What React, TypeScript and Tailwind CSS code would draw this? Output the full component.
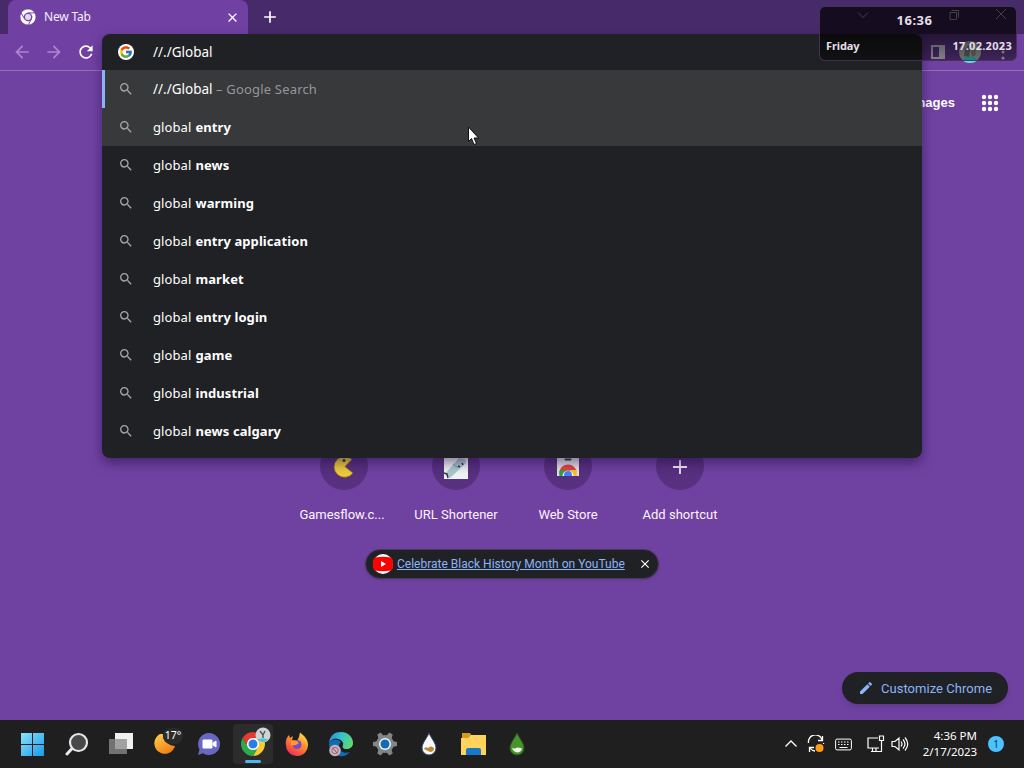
import React from "react";
import { MdArrowBack, MdArrowForward, MdRefresh, MdSearch, MdClose, MdAdd, MdEdit } from "react-icons/md";
import { FcGoogle } from "react-icons/fc";

const suggestions = [
  "entry",
  "news",
  "warming",
  "entry application",
  "market",
  "entry login",
  "game",
  "industrial",
  "news calgary",
];

function ChromeLogo({ size, mono = false }: { size: number; mono?: boolean }) {
  const sector = "M24 12H44.78A24 24 0 0 0 3.22 12L13.61 30A12 12 0 0 1 24 12Z";
  return (
    <svg width={size} height={size} viewBox="0 0 48 48">
      {!mono && <circle cx="24" cy="24" r="14" fill="#fff" />}
      <path d={sector} fill={mono ? "#fff" : "#e33b2e"} stroke={mono ? "#6b3fa0" : "none"} strokeWidth="2" />
      <path d={sector} transform="rotate(120 24 24)" fill={mono ? "#fff" : "#fcc934"} stroke={mono ? "#6b3fa0" : "none"} strokeWidth="2" />
      <path d={sector} transform="rotate(240 24 24)" fill={mono ? "#fff" : "#2da94f"} stroke={mono ? "#6b3fa0" : "none"} strokeWidth="2" />
      <circle cx="24" cy="24" r="9" fill={mono ? "#e9d9f5" : "#2a7de9"} />
    </svg>
  );
}

function TabStrip() {
  return (
    <div className="flex h-[34px] shrink-0 bg-[#472a6a] pl-2">
      <div className="flex h-full w-[240px] items-center rounded-t-lg bg-[#7041a3] pl-3 pr-2">
        <ChromeLogo size={16} mono />
        <span className="ml-2 grow text-[12px] tracking-[-0.2px] text-[#f6effc]">New Tab</span>
        <MdClose size={15} className="text-white" />
      </div>
      <div className="flex items-center pl-[12px] text-white">
        <MdAdd size={20} />
      </div>
      <div className="ml-auto flex items-start gap-[77px] pr-[16px] pt-2 text-[#ddd]">
        <svg width="14" height="14" viewBox="0 0 14 14" fill="none" stroke="currentColor"><path d="M2 4.500l5 5 5-5" /></svg>
        <svg width="14" height="14" viewBox="0 0 14 14" fill="none" stroke="currentColor"><path d="M3 4.500h6.500v7H3zM4.500 2.500h7v7" /></svg>
        <svg width="14" height="14" viewBox="0 0 14 14" fill="none" stroke="currentColor" className="-ml-[44px]"><path d="M2 1l10 10M12 1L2 11" /></svg>
      </div>
    </div>
  );
}

function Toolbar() {
  return (
    <div className="flex h-[37px] shrink-0 items-center border-b border-[#9470bb] bg-[#7041a3] pl-3">
      <MdArrowBack size={20} className="text-[#ac86d0]" />
      <MdArrowForward size={20} className="ml-3 text-[#ac86d0]" />
      <MdRefresh size={20} className="ml-3 text-white" />
      <div className="ml-auto flex items-center pr-[19px]">
        <svg width="14" height="14" viewBox="0 0 14 14"><path d="M1 1h12v12H1z" fill="none" stroke="#f0e6f8" strokeWidth="2" /><path d="M8 1h5v12H8z" fill="#f0e6f8" /></svg>
        <svg width="22" height="22" viewBox="0 0 22 22" className="ml-[14px]">
          <circle cx="11" cy="11" r="11" fill="#c3c6c8" />
          <path d="M3 18a11 11 0 0 0 16 0q-8-4-16 0z" fill="#2ff0ea" />
          <path d="M5 15L6 8l4-4 1 6-1 6z" fill="#80868b" />
          <path d="M12 9l4-3 1 8-4 2z" fill="#969b9f" />
        </svg>
        <svg width="4" height="16" viewBox="0 0 4 16" className="ml-[20px]" fill="#f0e6f8"><circle cx="2" cy="2" r="1.600" /><circle cx="2" cy="8" r="1.600" /><circle cx="2" cy="14" r="1.600" /></svg>
      </div>
    </div>
  );
}

function Omnibox() {
  return (
    <div className="absolute left-[102px] top-[34px] flex h-[424px] w-[820px] flex-col overflow-hidden rounded-lg bg-[#202124] text-[13px] text-white shadow-[0_5px_12px_0px_rgba(30,8,60,0.5)]">
      <div className="flex h-9 shrink-0 items-center pl-4">
        <span className="flex size-4 items-center justify-center rounded-full bg-white"><FcGoogle size={14} /></span>
        <span className="ml-[19px] text-[13.500px]">//./Global</span>
      </div>
      <div className="flex h-[38px] shrink-0 items-center border-l-[3px] border-[#8ab4f8] bg-[#38393b] pl-[13px]">
        <MdSearch size={16} className="text-[#a3a6aa]" />
        <span className="ml-[19px] whitespace-pre text-[13.500px]">//./Global<span className="text-[13px] tracking-[0.180px] text-[#94979a]"> – Google Search</span></span>
      </div>
      {suggestions.map((text, i) => (
        <div key={text} className={i === 0 ? "flex h-[38px] shrink-0 items-center bg-[#38393b] pl-4" : "flex h-[38px] shrink-0 items-center pl-4"}>
          <MdSearch size={16} className="text-[#a3a6aa]" />
          <span className="ml-[19px] w-[42.500px] whitespace-pre pt-0.5 tracking-[0.100px]">global </span>
          <b className="pt-0.5 tracking-[0.080px]">{text}</b>
        </div>
      ))}
    </div>
  );
}

function Shortcut({ label, nudged = false, children }: { label: string; nudged?: boolean; children: React.ReactNode }) {
  return (
    <div className="flex w-28 flex-col items-center">
      <div className="flex size-12 items-center justify-center rounded-full bg-[#57307f] pt-0.5">{children}</div>
      <span className={nudged ? "mr-1 mt-[17px] text-[13px] leading-4 text-[#fdf3ff]" : "mt-[17px] text-[13px] leading-4 text-[#fdf3ff]"}>{label}</span>
    </div>
  );
}

function NewTabPage() {
  return (
    <div className="flex min-h-0 grow flex-col bg-[#6f42a2] [font-family:Roboto,sans-serif]">
      <div className="flex h-16 shrink-0 items-center justify-end pr-[25px]">
        <span className="mr-[26px] text-[13px] font-bold text-white [font-family:'Liberation_Sans',sans-serif]">Images</span>
        <svg width="18" height="18" viewBox="0 0 18 18" fill="#fff">
          {[3, 9, 15].map((y) => [3, 9, 15].map((x) => <circle key={`${x}-${y}`} cx={x} cy={y} r="2.200" />))}
        </svg>
      </div>
      <div className="mt-[307px] flex shrink-0 justify-center">
        <Shortcut label="Gamesflow.c..." nudged>
          <svg width="24" height="24" viewBox="0 0 24 24"><path d="M20 4.500A10.500 10.500 0 1 0 21 18L13 11.500z" fill="#eccb3d" stroke="#80631c" strokeWidth=".8" /><circle cx="12" cy="5.500" r="1.500" fill="#4a310e" /></svg>
        </Shortcut>
        <Shortcut label="URL Shortener">
          <svg width="24" height="24" viewBox="0 0 24 24"><path d="M0 0h24v24H0z" fill="#eef2f3" /><path d="M1 19L15 3l6 1 1 4L6 23z" fill="#a9c8ce" /><path d="M9 9l5 4" stroke="#80999f" /><path d="M0 18l3 1 1 4M14 11l2 1M18 8l1 2" stroke="#2b3a3d" strokeWidth="1.500" fill="none" /></svg>
        </Shortcut>
        <Shortcut label="Web Store">
          <svg width="24" height="24" viewBox="0 0 24 24"><path d="M1 0h22v21H1z" fill="#e2e3e3" /><path d="M9.500 4.500h5" stroke="#3d4043" strokeWidth="2" strokeLinecap="round" /><path d="M3.500 17a8.500 7.500 0 0 1 17 0z" fill="#dd4a40" /><path d="M3.500 15.500a10 10 0 0 0 0 5.500H9l1-5z" fill="#2ba24c" /><path d="M14 15h6.500l.5 6h-6z" fill="#fbc02d" /><path d="M6.500 21a5.500 5.500 0 0 1 11 0z" fill="#fff" /><path d="M8 21v-1a4 4 0 0 1 8 0v1z" fill="#4285f4" /></svg>
        </Shortcut>
        <Shortcut label="Add shortcut">
          <svg width="16" height="16" viewBox="0 0 16 16" stroke="#f7e9ff" strokeWidth="1.800"><path d="M8 1v14M1 8h14" /></svg>
        </Shortcut>
      </div>
      <div className="mt-[26px] flex h-[30px] w-[294px] shrink-0 items-center self-center rounded-full border border-[#4b3b5d] bg-[#202124] pl-[7px] pr-[6px] shadow">
        <svg width="20" height="20" viewBox="0 0 20 20"><circle cx="10" cy="10" r="10" fill="#fff" /><path d="M2 3.500Q10 2 18 3.500Q20 4 20 10t-2 6.500Q10 18 2 16.500Q0 16 0 10t2-6.500z" fill="#f00" /><path d="M8 7l5 3-5 3z" fill="#fff" /></svg>
        <span className="ml-1 text-[12px] text-[#8ab4f8] underline">Celebrate Black History Month on YouTube</span>
        <MdClose size={14} className="ml-auto text-white" />
      </div>
      <div className="mb-4 mr-4 mt-auto flex h-8 w-[166px] items-center self-end rounded-full bg-[#202124] pl-4 text-[#8ab4f8] shadow-md">
        <MdEdit size={16} />
        <span className="ml-[7px] pt-px text-[13px] tracking-[0.040px]">Customize Chrome</span>
      </div>
    </div>
  );
}

function TaskItem({ children, active = false }: { children: React.ReactNode; active?: boolean }) {
  return (
    <div className={active ? "relative mx-[2px] flex h-10 w-10 items-center justify-center rounded bg-[#2c2c2c]" : "relative flex h-10 w-11 items-center justify-center"}>
      {children}
      {active && <span className="absolute bottom-px h-[3px] w-4 rounded-full bg-[#4cb8ee]" />}
    </div>
  );
}

function Taskbar() {
  return (
    <div className="flex h-12 shrink-0 items-center bg-[#1f1f1f] pl-[10px]">
      <TaskItem>
        <svg width="23" height="23" viewBox="0 0 24 24"><defs><linearGradient id="win" x1="0" y1="0" x2="1" y2="1"><stop stopColor="#8de1fb" /><stop offset="1" stopColor="#169ce9" /></linearGradient></defs><path d="M0 0h11.500v11.500H0zM12.500 0H24v11.500H12.500zM0 12.500h11.500V24H0zM12.500 12.500H24V24H12.500z" fill="url(#win)" /></svg>
      </TaskItem>
      <div className="w-px" />
      <TaskItem>
        <svg width="24" height="24" viewBox="0 0 24 24"><path d="M7.500 16L2 22" stroke="#e9e9e9" strokeWidth="3" strokeLinecap="round" /><circle cx="13.500" cy="10.500" r="8.500" fill="#47484a" stroke="#e6e6e6" strokeWidth="2.200" /></svg>
      </TaskItem>
      <TaskItem>
        <svg width="24" height="22" viewBox="0 0 24 22"><path d="M6 0h18v16H6z" fill="#f0f0f0" /><path d="M0 6h18v15H0z" fill="#727272" /><path d="M6 6h12v10H6z" fill="#a1a1a1" /></svg>
      </TaskItem>
      <TaskItem>
        <svg width="24" height="24" viewBox="0 0 24 24"><defs><linearGradient id="moon" x1="0" y1="0" x2=".7" y2="1"><stop stopColor="#ffd24b" /><stop offset="1" stopColor="#f17c12" /></linearGradient></defs><path d="M7 2A10.500 10.500 0 1 0 22 14C17 14 9 9 10 2z" fill="url(#moon)" /></svg>
        <span className="absolute left-[20px] top-[4px] flex h-4 w-[20px] items-center justify-center rounded-full bg-[#2b2b2b] text-[10.500px] text-white">17°</span>
      </TaskItem>
      <TaskItem>
        <svg width="24" height="24" viewBox="0 0 24 24"><path d="M12 1a11 11 0 1 1-6 20.200L1 23l1.500-5.500A11 11 0 0 1 12 1z" fill="#6668c2" /><path d="M6 8h9v8H6zM16 11l3-2v6l-3-2z" fill="#fff" stroke="#fff" strokeLinejoin="round" /></svg>
      </TaskItem>
      <TaskItem active>
        <ChromeLogo size={24} />
        <svg width="16" height="16" viewBox="0 0 16 16" className="absolute right-[2px] top-[3px]"><circle cx="8" cy="8" r="7.500" fill="#d0d3d4" /><path d="M2 12.500q6-2 11 0-5 5-11 0z" fill="#40c9cc" /><path d="M5 4l3 4 2-4M8 8v3" stroke="#4b5256" strokeWidth="1.400" fill="none" /></svg>
      </TaskItem>
      <TaskItem>
        <svg width="24" height="24" viewBox="0 0 24 24"><defs><linearGradient id="fox" x1=".8" y1="0" x2=".2" y2="1"><stop stopColor="#ffe44b" /><stop offset=".45" stopColor="#ff8a29" /><stop offset="1" stopColor="#ed245d" /></linearGradient></defs><path d="M15 .5c4 3 8 7 8 12a11 11 0 0 1-22 1C0 9 2 5 4 3l1 3 3-2-1 4 5 1 2-4z" fill="url(#fox)" /><circle cx="12" cy="12.500" r="4.500" fill="#7c48c7" /><path d="M6 9l5-.5 3 2.500-3 2-5 .5z" fill="#ff9b2d" /></svg>
      </TaskItem>
      <TaskItem>
        <svg width="26" height="26" viewBox="0 0 26 26"><defs><linearGradient id="edge" x1="0" y1=".3" x2="1" y2=".6"><stop stopColor="#2597df" /><stop offset=".5" stopColor="#36c5cc" /><stop offset="1" stopColor="#65d867" /></linearGradient></defs><path d="M1 13a12 12 0 0 0 21 8c-5 2-11 0-11-6 0-2 1-3 2-4C9 7 2 8 1 13z" fill="#136bb6" /><path d="M1 12C2 4 7 1 13 1c8 0 12 6 12 11 0 4-3 6-7 6-3 0-4-2-3-4 2-4-9-11-14-2z" fill="url(#edge)" /><circle cx="7" cy="19.500" r="5.800" fill="#c1b6be" /><circle cx="7" cy="19.500" r="3.200" fill="none" stroke="#c8576e" /><path d="M5 17l4 5" stroke="#8a5963" /></svg>
      </TaskItem>
      <TaskItem>
        <svg width="24" height="24" viewBox="0 0 24 24"><g fill="#818689"><circle cx="12" cy="12" r="9" />{[0, 60, 120, 180, 240, 300].map((a) => <path key={a} d="M9 5l1-5h4l1 5z" transform={`rotate(${a + 30} 12 12)`} />)}</g><circle cx="12" cy="12" r="6" fill="#f3f5f6" /><circle cx="12" cy="12" r="4.500" fill="#126bb4" /></svg>
      </TaskItem>
      <TaskItem>
        <svg width="24" height="24" viewBox="0 0 24 24"><path d="M12 1c2 5 7 10 7 15a7 7 0 0 1-14 0C5 11 10 6 12 1z" fill="#f6f8fb" stroke="#33466c" /><path d="M7 17q1-3 4-1 3-3 6 0 0 4-4 4-2-1-6-3z" fill="#bd8734" /></svg>
      </TaskItem>
      <TaskItem>
        <svg width="25" height="24" viewBox="0 0 25 24"><path d="M1 1h8l2 3h-2l-2 4H1z" fill="#d39a20" /><path d="M0 6h7l3-3h15v20H0z" fill="#ffd35c" /><path d="M5 23v-5q0-2 2-2h11q2 0 2 2v5z" fill="#1979c9" /></svg>
      </TaskItem>
      <TaskItem>
        <svg width="24" height="24" viewBox="0 0 24 24"><path d="M12 1c2 5 7 10 7 15a7 7 0 0 1-14 0C5 11 10 6 12 1z" fill="#43952c" stroke="#31561d" /><path d="M7 16q3 1 5-.5 3 0 5 1-1 4-5 4-4-1-5-4.500z" fill="#f0f5ec" /></svg>
      </TaskItem>
      <div className="ml-auto flex items-center text-white">
        <svg width="14" height="14" viewBox="0 0 14 14" fill="none" stroke="currentColor" strokeWidth="1.300"><path d="M1.500 9.500L7 4l5.500 5.500" /></svg>
        <svg width="18" height="18" viewBox="0 0 18 18" fill="none" stroke="currentColor" strokeWidth="1.300" className="ml-[9px]"><path d="M1.500 8A7 7 0 0 1 15 4.500M15.500 1v4.500H11M2.500 17v-4.500H7M3 13a7 7 0 0 0 5 3M16.500 9v-1" /><circle cx="12.500" cy="13" r="4" fill="#ff9a17" stroke="none" /></svg>
        <svg width="17" height="13" viewBox="0 0 17 13" fill="none" stroke="currentColor" className="ml-[10px]"><rect x=".6" y="1.100" width="15.800" height="10.800" rx="1.500" /><path d="M3 4h11M3 6.500h11" strokeDasharray="1.500 1.500" /><path d="M4.500 9.500h8" /></svg>
        <svg width="18" height="18" viewBox="0 0 18 18" fill="none" stroke="currentColor" strokeWidth="1.200" className="ml-[15px]"><path d="M11 3H1v10h11M4 16.500h8M5.500 13v3M9 13v3M12.500 1h4v4.500h-4zM14.500 5.500V16.500H12" /></svg>
        <svg width="18" height="16" viewBox="0 0 18 16" fill="none" stroke="currentColor" strokeWidth="1.200" className="ml-[6px]"><path d="M1 5.500h3L8 2v12l-4-3.500H1zM10 5.500q2 2.500 0 5M12 3.500q4 4.500 0 9M14 1.500q5.500 6.500 0 13" /></svg>
        <div className="ml-[10px] w-[58px] whitespace-nowrap text-right text-[11.500px] leading-4"><div>4:36 PM</div><div className="tracking-[-0.050px]">2/17/2023</div></div>
        <span className="ml-[11px] mr-5 flex size-4 items-center justify-center rounded-full bg-[#4cc2ff] text-[10px] text-[#183547]">1</span>
      </div>
    </div>
  );
}

function ClockWidget() {
  return (
    <div className="absolute left-[819px] top-[6px] flex h-[55px] w-[198px] flex-col justify-between rounded-md border border-[#4d3b60]/80 bg-linear-to-b from-black/70 from-45% to-black/45 px-[6px] pb-[6px] pt-[5px] font-bold text-[#e4dfe8]">
      <div className="pr-[7px] text-center text-[13px] leading-4 tracking-[0.500px]">16:36</div>
      <div className="-mr-[2px] flex justify-between text-[11px] leading-4"><span className="tracking-[-0.100px]">Friday</span><span className="tracking-[0.300px]">17.02.2023</span></div>
    </div>
  );
}

export default function App() {
  return (
    <div className="relative flex h-[768px] w-[1024px] flex-col overflow-hidden [font-family:'Noto_Sans',sans-serif]">
      <TabStrip />
      <Toolbar />
      <NewTabPage />
      <Taskbar />
      <Omnibox />
      <ClockWidget />
      <svg width="12" height="20" viewBox="0 0 12 20" className="absolute left-[468px] top-[126px]"><path d="M.5 1v14.500l3-3 2.500 6 2.500-1L6 12h4.500z" fill="#fff" stroke="#111" /></svg>
    </div>
  );
}
